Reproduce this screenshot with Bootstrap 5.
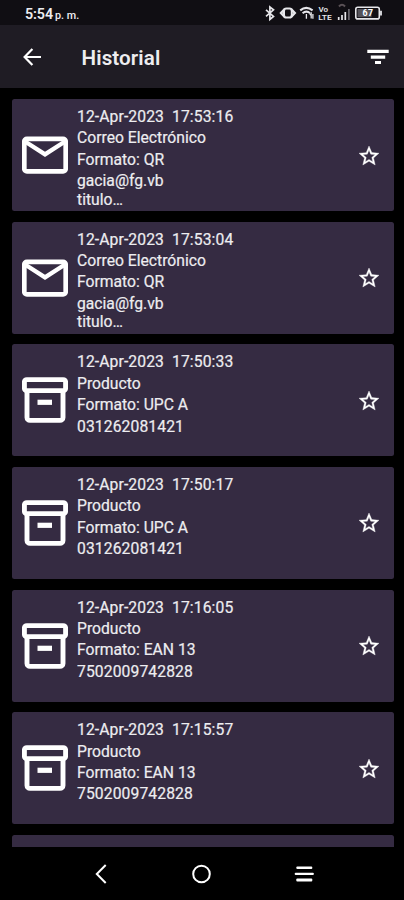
<!DOCTYPE html>
<html lang="es">
<head>
<meta charset="utf-8">
<meta name="viewport" content="width=device-width, initial-scale=1">
<title>Historial</title>
<link href="https://cdn.jsdelivr.net/npm/bootstrap@5.3.0/dist/css/bootstrap.min.css" rel="stylesheet">
<style>
  body { background: #000; color: #ededf0; font-family: Roboto, "Liberation Sans", sans-serif; }
  svg { display: block; flex: none; }
  .screen { height: 900px; }
  .statusbar { height: 25px; background: #100e13; padding: 2px 22px 0 25px; }
  .clock { font-size: 14.3px; font-weight: 600; line-height: 24px; letter-spacing: -.1px; }
  .clock span { font-size: 10.8px; letter-spacing: 0; margin-left: 2px; font-weight: 500; }
  .appbar { height: 63px; background: #1f1c24; padding: 0 14px 0 20px; }
  .appbar h1 { font-size: 20.6px; font-weight: 600; margin: 2px 0 0 37.5px; line-height: 24px; letter-spacing: .1px; }
  .history { height: 758.5px; padding: 11px 10px 0 11.5px; gap: 10.65px; }
  .entry { height: 112px; flex: none; background: #352b42; border-radius: 2.5px; padding: 7px 13.3px 0 10px; }
  .entry-icon { margin-top: -7px; }
  .entry-text { font-size: 15.7px; line-height: 21.4px; margin-left: 9.5px; white-space: pre; -webkit-text-stroke: .2px; }
  .entry-text .digits { letter-spacing: .1px; }
  .entry-text .tail { line-height: 16.6px; }
  .entry-star { margin-top: -6px; }
  .sysnav { height: 53.5px; padding: 1px 89.5px 0 94px; }
</style>
</head>
<body>
<svg width="0" height="0" class="position-absolute">
  <symbol id="mail" viewBox="0 0 46 46"><rect x="2.3" y="6.8" width="41.4" height="32.6" rx="2.6" fill="none" stroke="#fff" stroke-width="4.7"/><path d="M3 9.5 23 22.3 43 9.5" fill="none" stroke="#fff" stroke-width="4.4"/></symbol>
  <symbol id="box" viewBox="0 0 46 46"><g fill="none" stroke="#fff" stroke-width="4.9"><rect x="2.4" y="2.6" width="41.2" height="11" rx="2.4"/><path d="M5 13.5V40.4a3 3 0 0 0 3 3H38a3 3 0 0 0 3-3V13.5"/></g><path d="M15.5 22.7h14.5v5.2H15.5z" fill="#fff"/></symbol>
  <symbol id="star" viewBox="0 0 24 24"><path d="m22 9.24-7.19-.62L12 2 9.19 8.63 2 9.24l5.46 4.73L5.82 21 12 17.27 18.18 21l-1.63-7.03L22 9.24zM12 15.4l-3.76 2.27 1-4.28-3.32-2.88 4.38-.38L12 6.1l1.71 4.04 4.38.38-3.32 2.88 1 4.28L12 15.4z" fill="#fff" stroke="#fff" stroke-width=".35"/></symbol>
</svg>

<div class="screen d-flex flex-column overflow-hidden">
  <div class="statusbar d-flex justify-content-between align-items-start">
    <div class="clock">5:54<span>p. m.</span></div>
    <svg width="118" height="22" viewBox="264 2 118 22" fill="none" stroke="#e6e6ea">
      <path d="m266 9.8 7.5 6.6-3.6 3V7l3.6 2.8-7.5 6.6" stroke-width="1.7"/>
      <path d="M284.5 9.2 281 13l3.5 3.8M291.3 9.2l3.5 3.8-3.5 3.8" stroke-width="2.4"/><rect x="284" y="8.4" width="7.8" height="9.2" rx="2.4" stroke-width="2"/>
      <path d="M300.2 10.4q6-5 12.4 0M302.6 13.2q3.8-3 7.6 0" stroke-width="2.1"/><path d="M306.4 14v4.8M311.2 18.5v-5l-1.4 1.5M312.9 14v4.8" stroke-width="1.3"/>
      <g fill="#e6e6ea" stroke="none" font-family="Roboto, sans-serif" font-weight="600" font-size="8"><text x="318.5" y="12.2">Vo</text><text x="318.2" y="20.4" textLength="13.5" lengthAdjust="spacingAndGlyphs">LTE</text></g>
      <path d="M338.7 20v-3M342 20v-5M345.3 20v-8" stroke-width="1.7"/><path d="M348.9 20V9" stroke="#77747c" stroke-width="1.5"/><path d="M339 6.5q3-3.5 6 0" stroke="#5b5257" stroke-width="2"/>
      <rect x="355.8" y="7.3" width="23.5" height="11.6" rx="2" stroke-width="1.6"/><path d="M381 10.8v4.8" stroke-width="1.8"/>
      <path d="M357.5 9h14v8.2h-14z" fill="#55535a" stroke="none"/>
      <text x="362.4" y="16.2" fill="#fff" stroke="none" font-family="Roboto, sans-serif" font-weight="700" font-size="8.8" textLength="10.6">67</text>
    </svg>
  </div>

  <header class="appbar d-flex align-items-center">
    <svg width="24" height="24" viewBox="0 0 24 24" fill="none" stroke="#fff" stroke-width="2.2"><path d="M21 12H5M12.4 4 4.6 12l7.8 8"/></svg>
    <h1>Historial</h1>
    <svg class="ms-auto" width="24" height="24" viewBox="0 0 24 24" fill="#fff"><path d="M1.3 4.7h21.4v3.2H1.3zM4.8 10.5h14.4v3.2H4.8zM9 16h6v3H9z"/></svg>
  </header>

  <main class="history d-flex flex-column overflow-hidden" id="history"></main>

  <nav class="sysnav d-flex justify-content-between align-items-center">
    <svg width="14" height="22" viewBox="0 0 14 22" fill="none" stroke="#fff" stroke-width="2"><path d="M11.7 2 2.8 11l8.9 9"/></svg>
    <svg class="ms-1" width="20" height="20" viewBox="0 0 20 20" fill="none" stroke="#fff" stroke-width="2"><circle cx="9.5" cy="10" r="8.3"/></svg>
    <svg width="22" height="20" viewBox="0 0 22 20" fill="#fff"><rect x="3.3" y="2.4" width="16" height="2.7" rx="1"/><rect x="1.7" y="8.8" width="19.2" height="2.3" rx="1"/><rect x="3.3" y="14.5" width="16" height="3" rx="1"/></svg>
  </nav>
</div>

<script src="https://cdn.jsdelivr.net/npm/bootstrap@5.3.0/dist/js/bootstrap.bundle.min.js"></script>
<script>
  const entries = [
    ["mail", "17:53:16", "Correo Electrónico", "QR", "gacia@fg.vb", "titulo…"],
    ["mail", "17:53:04", "Correo Electrónico", "QR", "gacia@fg.vb", "titulo…"],
    ["box", "17:50:33", "Producto", "UPC A", "031262081421"],
    ["box", "17:50:17", "Producto", "UPC A", "031262081421"],
    ["box", "17:16:05", "Producto", "EAN 13", "7502009742828"],
    ["box", "17:15:57", "Producto", "EAN 13", "7502009742828"]
  ];
  const card = ([icon, time, kind, format, value, tail]) => `
    <article class="entry d-flex align-items-start">
      <svg class="entry-icon align-self-center" width="46" height="46"><use href="#${icon}"/></svg>
      <div class="entry-text"><div class="digits">12-Apr-2023  ${time}</div><div>${kind}</div><div>Formato: ${format}</div><div class="${icon === "box" ? "digits" : ""}">${value}</div>${tail ? `<div class="tail">${tail}</div>` : ""}</div>
      <svg class="entry-star align-self-center ms-auto" width="24" height="24"><use href="#star"/></svg>
    </article>`;
  document.getElementById("history").innerHTML = entries.map(card).join("") + '<article class="entry"></article>';
</script>
</body>
</html>
